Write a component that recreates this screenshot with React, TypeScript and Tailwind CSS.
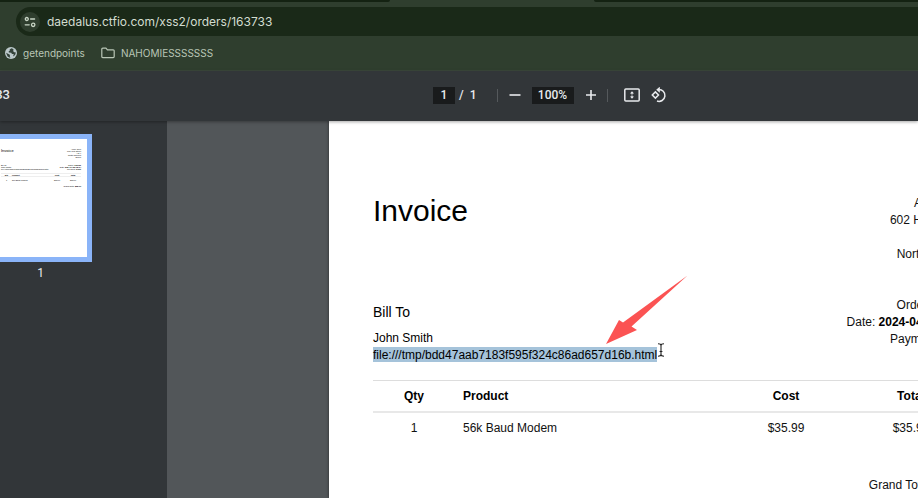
import type { ReactNode } from "react";

const sellerLines = ["Acme Corp", "602 Hunt Street", "Apt 4", "North Carolina", "27601"];

const details = [
  { label: "Order:", value: "163733" },
  { label: "Date:", value: "2024-04-22 12:34" },
  { label: "Payment:", value: "Debit" },
];

const items = [{ qty: 1, product: "56k Baud Modem", cost: "$35.99", total: "$35.99" }];

function TabStrip() {
  return (
    <div className="flex h-[7px] items-start bg-[#2f3e2e]">
      <div className="h-[2px] w-[390px] shrink-0 rounded-br bg-[#142212]" />
      <div className="w-[204px] shrink-0" />
      <div className="h-[2px] grow rounded-bl bg-[#142212]" />
    </div>
  );
}

function AddressBar() {
  return (
    <form className="flex h-[29px] items-center bg-[#2f3e2e] pl-4" onSubmit={(e) => e.preventDefault()}>
      <div className="flex h-full min-w-0 grow items-center gap-[7px] rounded-l-full bg-[#1a2918] pl-1">
        <button type="button" aria-label="View site information" className="flex size-5 shrink-0 items-center justify-center rounded-full bg-[#2f3e2e]">
          <svg viewBox="0 0 12 12" className="size-3" fill="none" stroke="#c9d6c6" strokeWidth="1.3" strokeLinecap="round">
            <circle cx="2.8" cy="3" r="1.5" />
            <path d="M6.6 3h4M1.2 8.8h4" />
            <circle cx="9.2" cy="8.8" r="1.7" />
          </svg>
        </button>
        <input
          aria-label="Address"
          defaultValue="daedalus.ctfio.com/xss2/orders/163733"
          className="min-w-0 grow bg-transparent pt-px text-[12px] text-[#d3ddd0] outline-none"
        />
      </div>
    </form>
  );
}

function Bookmarks() {
  return (
    <nav aria-label="Bookmarks" className="flex h-[35px] items-center gap-4 border-b border-[#3b483b] bg-[#2f3e2e] pl-[5px] text-[10px] text-[#b9c6b6]">
      <a href="#getendpoints" className="flex items-center gap-[6px]">
        <svg viewBox="0 0 12 12" className="size-3">
          <circle cx="6" cy="6" r="6" fill="#bcc9cb" />
          <path d="M6.6 1.2 4.6 2.4 4.9 3.6 3.6 4.5 3.9 5.5 6.2 5.7 7 6.9 8.7 7.1 8.1 9.4 10.1 8 10.9 5.6 9.3 5.2 8.2 4.2 8.5 2.2Z M1.1 5.7 3.5 7 5.1 8 4.7 9.1 5.4 10.9 2.6 9.6Z" fill="#34433a" />
        </svg>
        getendpoints
      </a>
      <a href="#nahomies" className="flex items-center gap-[6px]">
        <svg viewBox="0 0 14 12" className="h-3 w-[14px]" fill="none" stroke="#b9c6b6" strokeWidth="1.2" strokeLinejoin="round">
          <path d="M.8 2.2Q.8 1.2 1.8 1.2H5L6.4 2.8H12.2Q13.2 2.8 13.2 3.8V9.6Q13.2 10.6 12.2 10.6H1.8Q.8 10.6.8 9.6Z" />
        </svg>
        NAHOMIESSSSSSS
      </a>
    </nav>
  );
}

function IconButton({ label, children }: { label: string; children: ReactNode }) {
  return (
    <button type="button" aria-label={label} className="flex size-4 shrink-0 items-center justify-center">
      {children}
    </button>
  );
}

function ViewerToolbar() {
  return (
    <div role="toolbar" aria-label="Document controls" className="relative z-10 flex h-[50px] shrink-0 items-center bg-[#323639] pb-[2px] font-[Roboto,sans-serif] text-[12px] font-medium text-[#e8eaed] shadow-[0_1px_3px_rgba(0,0,0,0.35)]">
      <div className="w-[433px] shrink-0">
        <h1 className="flex w-[10px] justify-end overflow-hidden text-[13px]">163733</h1>
      </div>
      <input aria-label="Page number" defaultValue="1" className="h-[17px] w-[22px] bg-[#191b1c] text-center outline-none" />
      <span className="pl-1">/</span>
      <span className="pl-[6px]">1</span>
      <span className="ml-5 h-[13px] w-px bg-[#55595c]" />
      <div className="ml-[9px] flex items-center gap-[9px]">
        <IconButton label="Zoom out">
          <svg viewBox="0 0 16 16" className="size-4" stroke="#e8eaed" strokeWidth="1.6"><path d="M2.5 8h11" /></svg>
        </IconButton>
        <input aria-label="Zoom level" defaultValue="100%" className="h-[17px] w-[42px] bg-[#191b1c] text-center outline-none" />
        <IconButton label="Zoom in">
          <svg viewBox="0 0 16 16" className="size-4" stroke="#e8eaed" strokeWidth="1.6"><path d="M3 8h10M8 3v10" /></svg>
        </IconButton>
      </div>
      <span className="ml-2 h-[13px] w-px bg-[#55595c]" />
      <div className="ml-4 flex items-center gap-[11px]">
        <IconButton label="Fit to page">
          <svg viewBox="0 0 16 14" className="h-[14px] w-4">
            <rect x=".8" y="1" width="14.4" height="12" rx="1" fill="none" stroke="#e8eaed" strokeWidth="1.5" />
            <path d="M8 3.2 10 5.4H6ZM8 10.8 6 8.6h4ZM7.4 5.4h1.2v1H7.4ZM7.4 7.6h1.2v1H7.4Z" fill="#e8eaed" />
          </svg>
        </IconButton>
        <IconButton label="Rotate counterclockwise">
          <svg viewBox="0 0 16 16" className="size-4" fill="none" stroke="#e8eaed" strokeWidth="1.5">
            <path d="M4.4 4.9 7.5 8 4.4 11.1 1.3 8Z" />
            <path d="M7.4 2.6A5.9 5.9 0 1 1 6 14" />
            <path d="M8.8 -.3V5.7L5.2 2.7Z" fill="#e8eaed" stroke="none" />
          </svg>
        </IconButton>
      </div>
    </div>
  );
}

function Thumbnail() {
  return (
    <button type="button" aria-label="Page 1" className="-ml-[13px] block w-[105px] border-[5px] border-[#8ab4f8] bg-white">
      <span className="flex h-[118px] flex-col pt-[9px] pr-[6px] pl-[9px] text-left text-[2px] leading-[2px] text-black">
        <span className="flex h-4 justify-between">
          <span className="text-[4px] leading-[6px]">Invoice</span>
          <span className="text-right">
            {sellerLines.map((line) => <span key={line} className="block">{line}</span>)}
          </span>
        </span>
        <span className="flex h-[9px] justify-between">
          <span>
            <span className="block">Bill To</span>
            <span className="block">John Smith</span>
            <span className="block whitespace-nowrap">file:///tmp/bdd47aab7183f595f324c86ad657d16b.html</span>
          </span>
          <span className="text-right">
            {details.map((d) => <span key={d.label} className="block whitespace-nowrap">{d.label} <b>{d.value}</b></span>)}
          </span>
        </span>
        <span className="grid h-1 grid-cols-[11px_37px_16px_16px] items-center border-y border-[#eee] text-center font-bold">
          <span>Qty</span><span className="text-left">Product</span><span>Cost</span><span>Total</span>
        </span>
        <span className="grid h-2 grid-cols-[11px_37px_16px_16px] pt-[2px] text-center">
          <span>1</span><span className="text-left">56k Baud Modem</span><span>$35.99</span><span>$35.99</span>
        </span>
        <span className="text-right">Grand Total: <b>$35.99</b></span>
      </span>
    </button>
  );
}

function Invoice() {
  return (
    <article className="relative w-[689px] shrink-0 bg-white px-11 pt-[73px] text-[12px] leading-[17px] text-black shadow-[0_0_3px_rgba(0,0,0,0.5)]">
      <header className="flex justify-between">
        <div>
          <h2 className="text-[30px] leading-[34px]">Invoice</h2>
          <h3 className="mt-[76px] text-[14px] leading-[17px]">Bill To</h3>
          <p className="mt-[9px]">John Smith</p>
          <p><mark className="inline-block h-[15px] bg-[#a5c3da] align-top leading-[17px] text-black">file:///tmp/bdd47aab7183f595f324c86ad657d16b.html</mark></p>
        </div>
        <div className="pt-px text-right text-[#111]">
          <address className="not-italic">
            {sellerLines.map((line) => <p key={line}>{line}</p>)}
          </address>
          <div className="mt-[17px]">
            {details.map((d) => <p key={d.label}>{d.label} <b className="text-black">{d.value}</b></p>)}
          </div>
        </div>
      </header>
      <table className="mt-4 w-full table-fixed border-collapse">
        <colgroup>
          <col className="w-[82px]" />
          <col />
          <col className="w-[124px]" />
          <col className="w-[126px]" />
        </colgroup>
        <thead>
          <tr className="h-[31px] border-t border-b-2 border-t-[#ddd] border-b-[#e8e8e8]">
            <th className="pt-[2px]">Qty</th>
            <th className="px-2 pt-[2px] text-left">Product</th>
            <th className="pt-[2px]">Cost</th>
            <th className="pt-[2px]">Total</th>
          </tr>
        </thead>
        <tbody>
          {items.map((item) => (
            <tr key={item.product} className="h-8 text-center text-[#111]">
              <td>{item.qty}</td>
              <td className="px-2 text-left">{item.product}</td>
              <td>{item.cost}</td>
              <td>{item.total}</td>
            </tr>
          ))}
        </tbody>
      </table>
      <p className="mt-[33px] text-right text-[#111]">Grand Total: <b>$35.99</b></p>
      <svg viewBox="0 0 82 69" className="absolute left-[277px] top-[154px] h-[69px] w-[82px]" fill="#fb5353">
        <path d="M81.5.5 25.5 51.5 31 55 0 69 13 45 17 47.5Z" />
      </svg>
      <svg viewBox="0 0 8 14" className="absolute left-[328px] top-[222px] h-[14px] w-2" fill="none" stroke="#222" strokeWidth="1.1">
        <path d="M1 .8Q4 .8 4 2.5V11.5Q4 13.2 1 13.2M7 .8Q4 .8 4 2.5M4 11.5Q4 13.2 7 13.2M2.6 8.5h2.8" />
      </svg>
    </article>
  );
}

export default function App() {
  return (
    <div className="flex h-screen flex-col overflow-hidden bg-[#525659] font-[Inter,sans-serif]">
      <TabStrip />
      <AddressBar />
      <Bookmarks />
      <ViewerToolbar />
      <div className="flex min-h-0 grow font-['Liberation_Sans',Arial,sans-serif]">
        <aside aria-label="Pages" className="w-[167px] shrink-0 bg-[#323639] pt-[13px]">
          <Thumbnail />
          <p className="w-[81px] pt-[3px] text-center font-[Roboto,sans-serif] text-[12px] leading-4 text-[#e8eaed]">1</p>
        </aside>
        <main className="flex min-w-0 grow overflow-hidden pl-[162px]">
          <Invoice />
        </main>
      </div>
    </div>
  );
}
